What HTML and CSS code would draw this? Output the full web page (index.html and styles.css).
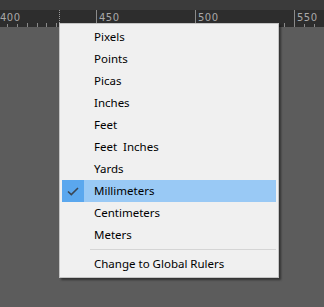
FILE: index.html
```html
<!DOCTYPE html>
<html lang="en">
<head>
    <meta charset="UTF-8">
    <title>Ruler units</title>
    <link rel="stylesheet" href="styles.css">
</head>
<body>
    <div class="topbar"></div>
    <div class="ruler">
        <div class="marks">
            <div class="mark"><span>400</span></div>
            <div class="mark"><span>450</span></div>
            <div class="mark"><span>500</span></div>
            <div class="mark"><span>550</span></div>
        </div>
        <div class="cursor"></div>
    </div>
    <div class="canvas"></div>

    <div class="menu">
        <div class="item"><span class="check"></span><span class="label">Pixels</span></div>
        <div class="item"><span class="check"></span><span class="label">Points</span></div>
        <div class="item"><span class="check"></span><span class="label">Picas</span></div>
        <div class="item"><span class="check"></span><span class="label">Inches</span></div>
        <div class="item"><span class="check"></span><span class="label">Feet</span></div>
        <div class="item"><span class="check"></span><span class="label">Feet&nbsp;&nbsp;Inches</span></div>
        <div class="item"><span class="check"></span><span class="label">Yards</span></div>
        <div class="item selected">
            <span class="check">
                <svg width="12" height="9" viewBox="0 0 12 9"><path d="M1 4.5 L4.3 7.6 L11 1" fill="none" stroke="#3a4654" stroke-width="1.6"/></svg>
            </span>
            <span class="label">Millimeters</span>
        </div>
        <div class="item"><span class="check"></span><span class="label">Centimeters</span></div>
        <div class="item"><span class="check"></span><span class="label">Meters</span></div>
        <div class="separator"></div>
        <div class="item"><span class="check"></span><span class="label">Change to Global Rulers</span></div>
    </div>
</body>
</html>
```

FILE: styles.css
```css
body {
    margin: 0;
    width: 324px;
    height: 307px;
    overflow: hidden;
    background-color: #5c5c5c;
    font-family: 'Segoe UI', 'Noto Sans', sans-serif;
    position: relative;
}
.topbar {
    height: 10px;
    background-color: #3b3b3b;
}
.ruler {
    height: 17px;
    background-color: #2d2d2d;
    position: relative;
    overflow: hidden;
}
.marks {
    display: flex;
    margin-left: -3px;
}
.mark {
    flex: 0 0 99px;
    height: 17px;
    border-left: 1px solid #8a8a8a;
    box-sizing: border-box;
    background-image: repeating-linear-gradient(to right, transparent 0, transparent 9px, #8a8a8a 9px, #8a8a8a 10px, transparent 10px, transparent 9.9px);
    background-image: repeating-linear-gradient(to right, transparent 0, transparent 8.9px, #8a8a8a 8.9px, #8a8a8a 9.9px);
    background-size: 100% 4px;
    background-position: 0 13px;
    background-repeat: no-repeat;
}
.mark span {
    display: block;
    padding: 2px 0 0 2px;
    font-family: 'DejaVu Sans', sans-serif;
    font-size: 10px;
    line-height: 12px;
    letter-spacing: 0.5px;
    color: #a8a8a8;
    background-color: #2d2d2d;
    width: 20px;
}
.cursor {
    position: absolute;
    left: 59px;
    top: 0;
    height: 17px;
    border-left: 1px dotted #9a9a9a;
}
.menu {
    position: absolute;
    left: 59px;
    top: 23px;
    width: 214px;
    padding: 2px;
    background-color: #f0f0f0;
    border: 1px solid #c4c4c4;
    box-shadow: 2px 2px 2px rgba(0,0,0,0.45);
}
.item {
    display: flex;
    align-items: center;
    height: 22px;
    font-size: 11.5px;
    color: #000;
}
.check {
    flex: 0 0 22px;
    height: 22px;
    display: flex;
    align-items: center;
    justify-content: center;
}
.label {
    padding: 0 0 2px 10px;
}
.item.selected {
    background-color: #99c9f5;
}
.item.selected .check {
    background-color: #5aa7ee;
}
.separator {
    height: 1px;
    margin: 3px 0 3px 28px;
    background-color: #d5d5d5;
}
```
